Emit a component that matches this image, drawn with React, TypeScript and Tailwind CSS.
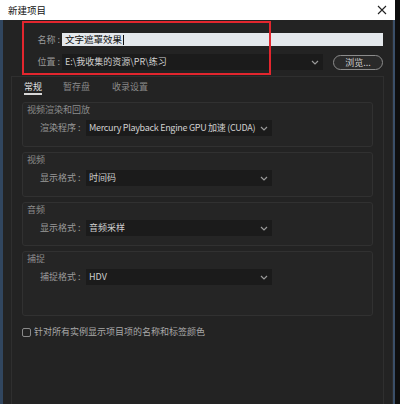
import React from 'react';

const font = { fontFamily: '"Noto Sans CJK SC", "Noto Sans", sans-serif' };

const Chevron: React.FC = () => (
  <svg width="8" height="5" viewBox="0 0 8 5" className="shrink-0">
    <path d="M1 1 L4 4 L7 1" fill="none" stroke="#9a9a9a" strokeWidth="1.2" />
  </svg>
);

const Select: React.FC<{ value: string; className: string; textClass?: string }> = ({
  value,
  className,
  textClass = '',
}) => (
  <div
    className={`flex h-[16px] items-center justify-between bg-[#1b1b1b] pr-[4px] pl-[3px] text-[9px] leading-[16px] whitespace-nowrap text-[#cfcfcf] ${className}`}
  >
    <span className={textClass}>{value}</span>
    <Chevron />
  </div>
);

const Group: React.FC<{
  title: string;
  label: string;
  value: string;
  pb: string;
  textClass?: string;
}> = ({ title, label, value, pb, textClass }) => (
  <div
    className={`flex flex-col rounded-[3px] border border-[#313131] bg-[#252525] pt-[1px] ${pb}`}
  >
    <div className="h-[12px] pl-[4px] text-[9px] leading-[12px] text-[#8c8c8c]">{title}</div>
    <div className="mt-[4px] flex items-center pl-[17px]">
      <div className="w-[46px] text-[9px] leading-[16px] whitespace-nowrap text-[#9a9a9a]">
        {label}
      </div>
      <Select value={value} className="w-[186px]" textClass={textClass} />
    </div>
  </div>
);

export default function App() {
  return (
    <div className="relative flex h-[404px] w-[400px] bg-[#0e0e0e]" style={font}>
      <div className="flex h-full w-[395px] flex-col">
        <div className="flex h-[20px] shrink-0 items-center justify-between bg-white pr-[8px] pl-[8px]">
          <span className="text-[9.5px] leading-[12px] text-[#111]">新建项目</span>
          <svg width="10" height="10" viewBox="0 0 10 10">
            <path d="M1 1 L9 9 M9 1 L1 9" stroke="#222" strokeWidth="1.1" />
          </svg>
        </div>

        <div className="flex grow border-r-[2px] border-l-[3px] border-r-[#3b4f68] border-l-[#31465f]">
          <div className="flex grow flex-col border-r border-r-[#2c2c2c] bg-[#232323] pt-[13px]">
            <div className="flex h-[13px] items-center">
              <div className="w-[59px] pr-[2px] text-right text-[9px] leading-[13px] whitespace-nowrap text-[#9a9a9a]">
                名称 :
              </div>
              <div className="flex h-[13px] w-[321px] items-center bg-[#e4e8ec] pl-[3px] text-[9.5px] leading-[13px] text-[#111]">
                文字遮罩效果
                <span className="ml-[1px] h-[10px] w-[1px] bg-[#111]" />
              </div>
            </div>

            <div className="mt-[8px] flex h-[16px] items-center">
              <div className="w-[59px] pr-[2px] text-right text-[9px] leading-[16px] whitespace-nowrap text-[#9a9a9a]">
                位置 :
              </div>
              <Select value="E:\我收集的资源\PR\练习" className="w-[261px]" />
              <div className="ml-[10px] flex h-[15px] w-[50px] items-center justify-center rounded-full border border-[#8c8c8c] bg-[#2a2a2a] text-[9px] leading-[13px] text-[#cfcfcf]">
                浏览...
              </div>
            </div>

            <div className="mt-[6px] mr-[8px] ml-[8px] flex grow flex-col border-t border-r border-l border-[#2f2f2f] bg-[#232323] pt-[4px] pr-[10px] pl-[10px]">
              <div className="flex gap-[21px] pl-[2px]">
                <div className="h-[14px] border-b-[2px] border-[#d8d8d8] text-[9px] leading-[12px] text-[#e0e0e0]">
                  常规
                </div>
                <div className="h-[14px] text-[9px] leading-[12px] text-[#8a8a8a]">暂存盘</div>
                <div className="ml-[1px] h-[14px] text-[9px] leading-[12px] text-[#8a8a8a]">
                  收录设置
                </div>
              </div>

              <div className="mt-[7px] flex flex-col gap-[5px]">
                <Group
                  title="视频渲染和回放"
                  label="渲染程序 :"
                  value="Mercury Playback Engine GPU 加速 (CUDA)"
                  pb="pb-[10px]"
                  textClass="tracking-[-0.3px]"
                />
                <Group title="视频" label="显示格式 :" value="时间码" pb="pb-[10px]" />
                <Group title="音频" label="显示格式 :" value="音频采样" pb="pb-[9px]" />
                <Group title="捕捉" label="捕捉格式 :" value="HDV" pb="pb-[30px]" />
              </div>

              <div className="mt-[10px] flex items-center gap-[3px]">
                <div className="h-[9px] w-[9px] rounded-[2px] border border-[#8a8a8a]" />
                <span className="text-[9px] leading-[12px] text-[#a8a8a8]">
                  针对所有实例显示项目项的名称和标签颜色
                </span>
              </div>
            </div>
          </div>
        </div>
      </div>

      <div className="pointer-events-none absolute top-[21px] left-[22px] h-[54px] w-[249px] border-2 border-[#e3262e]" />
    </div>
  );
}
